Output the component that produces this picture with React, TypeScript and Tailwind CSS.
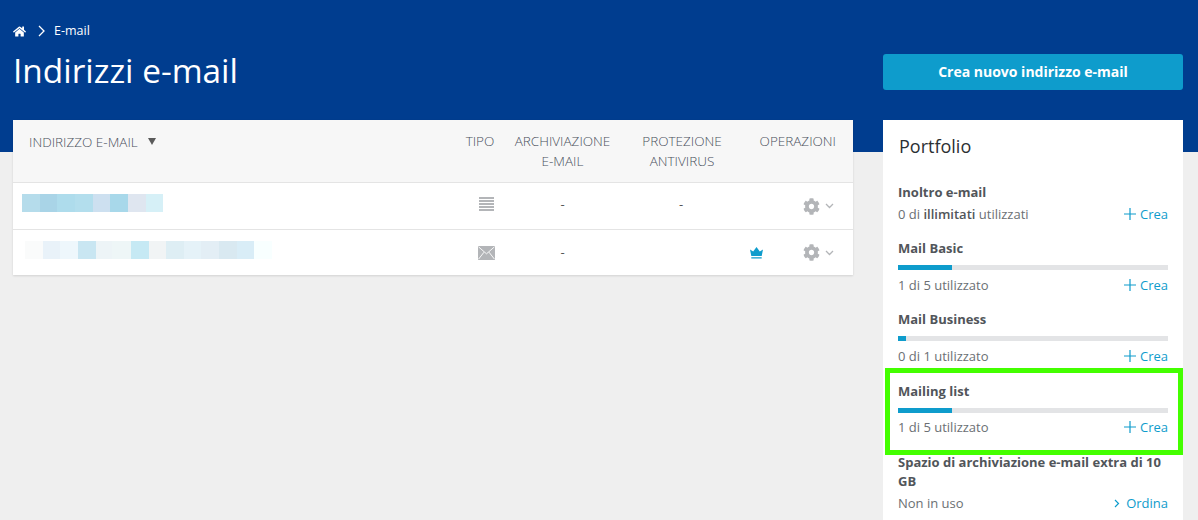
import React from "react";
import { FaCog, FaHome } from "react-icons/fa";

const font = "font-['Open_Sans',sans-serif]";

function Gear() {
  return (
    <div className="flex items-center justify-end gap-[5px] pr-[19px] text-[#b3b5b8]">
      <FaCog className="h-[17px] w-[17px]" />
      <svg width="9" height="6" viewBox="0 0 9 6" fill="none" stroke="#b3b5b8" strokeWidth="1.3"><path d="M1 1l3.5 3.5L8 1" /></svg>
    </div>
  );
}

function Crea() {
  return (
    <span className="flex items-center gap-[4px] text-[#0e9ccc]">
      <svg width="12" height="12" viewBox="0 0 12 12" stroke="#0e9ccc" strokeWidth="1.2"><path d="M6 0v12M0 6h12" /></svg>
      Crea
    </span>
  );
}

function Bar({ w }: { w: string }) {
  return (
    <div className="mt-[8px] h-[5px] w-full bg-[#e3e4e6]">
      <div className={`h-full bg-[#0e9ccc] ${w}`} />
    </div>
  );
}

function Quota({ title, w, text, gap }: { title: string; w: string; text: string; gap: string }) {
  return (
    <div>
      <div className="text-[13px] leading-[18px] font-bold text-[#51555a]">{title}</div>
      <Bar w={w} />
      <div className={`${gap} flex items-center justify-between text-[13px] leading-[18px] text-[#6b6f73]`}>
        <span>{text}</span>
        <Crea />
      </div>
    </div>
  );
}

export default function App() {
  return (
    <div className={`${font} h-[520px] w-[1198px] overflow-hidden bg-[#efefef]`}>
      <header className="flex h-[152px] items-start justify-between bg-[#003d8f] pr-[15px] pl-[13px] text-white">
        <div>
          <div className="mt-[22px] flex h-[18px] items-center text-[12.5px]">
            <FaHome className="h-[13px] w-[13px]" />
            <svg className="mr-[8px] ml-[12px]" width="8" height="12" viewBox="0 0 8 12" fill="none" stroke="white" strokeWidth="1.3"><path d="M1 1l5 5-5 5" /></svg>
            <span>E-mail</span>
          </div>
          <h1 className="mt-[7px] text-[33.4px] leading-[46px] font-normal">Indirizzi e-mail</h1>
        </div>
        <button className="mt-[54px] h-[36px] w-[300px] rounded-[3px] bg-[#0e9ccc] pb-[1px] text-[14px] font-bold text-white">Crea nuovo indirizzo e-mail</button>
      </header>

      <div className="-mt-[32px] flex items-start justify-between pr-[15px] pl-[13px]">
        <main className="w-[840px] bg-white shadow-[0_1px_2px_rgba(0,0,0,0.12)]">
          <div className="grid h-[63px] grid-cols-[442px_50px_115px_122px_111px] border-b border-[#e4e4e4] bg-[#f7f7f7] pt-[11px] text-center text-[13.5px] leading-[20px] font-light text-[#4a505c]">
            <div className="mt-[1px] flex items-start pl-[16px]">
              <span>INDIRIZZO E-MAIL</span>
              <svg className="mt-[6px] ml-[10px]" width="8" height="7" viewBox="0 0 8 7" fill="#5a5a5a"><path d="M0 0h8L4 7z" /></svg>
            </div>
            <div>TIPO</div>
            <div>ARCHIVIAZIONE<br />E-MAIL</div>
            <div className="pl-[2px]">PROTEZIONE<br />ANTIVIRUS</div>
            <div className="pr-[17px] text-right">OPERAZIONI</div>
          </div>

          <div className="grid h-[47px] grid-cols-[442px_50px_115px_122px_111px] items-center border-b border-[#e4e4e4] text-center text-[13px] text-[#555]">
            <div className="mb-[6px] flex pl-[9px]">
              <div className="h-[18px] w-[18px] bg-[#b5dceb]" />
              <div className="h-[18px] w-[17px] bg-[#a9d4e7]" />
              <div className="h-[18px] w-[18px] bg-[#aedcec]" />
              <div className="h-[18px] w-[18px] bg-[#b3deed]" />
              <div className="h-[18px] w-[17px] bg-[#cde0f0]" />
              <div className="h-[18px] w-[18px] bg-[#a8d8ea]" />
              <div className="h-[18px] w-[18px] bg-[#dfe6f0]" />
              <div className="h-[18px] w-[17px] bg-[#d6f0f7]" />
            </div>
            <div className="mb-[4px] flex justify-center pl-[13px]">
              <svg width="15" height="14" viewBox="0 0 15 14" fill="#b3b5b8"><path d="M0 0h15v2H0zM0 3h15v2H0zM0 6h15v2H0zM0 9h15v2H0zM0 12h15v2H0z" /></svg>
            </div>
            <div className="mb-[2px]">-</div>
            <div className="mb-[2px]">-</div>
            <Gear />
          </div>

          <div className="grid h-[45px] grid-cols-[442px_50px_115px_122px_111px] items-center text-center text-[13px] text-[#555]">
            <div className="mb-[6px] flex pl-[12px]">
              <div className="h-[18px] w-[18px] bg-[#fafbfb]" />
              <div className="h-[18px] w-[17px] bg-[#e9f2f9]" />
              <div className="h-[18px] w-[18px] bg-[#eef7fc]" />
              <div className="h-[18px] w-[18px] bg-[#c9e6f2]" />
              <div className="h-[18px] w-[16px] bg-[#edf4f7]" />
              <div className="h-[18px] w-[19px] bg-[#eef6f7]" />
              <div className="h-[18px] w-[18px] bg-[#c6e9f4]" />
              <div className="h-[18px] w-[17px] bg-[#f1f4f5]" />
              <div className="h-[18px] w-[18px] bg-[#deeef4]" />
              <div className="h-[18px] w-[17px] bg-[#e5f2f8]" />
              <div className="h-[18px] w-[18px] bg-[#e3eef5]" />
              <div className="h-[18px] w-[18px] bg-[#d9e9f1]" />
              <div className="h-[18px] w-[17px] bg-[#d9edf7]" />
              <div className="h-[18px] w-[18px] bg-[#f8ffff]" />
            </div>
            <div className="flex justify-center pl-[13px]">
              <svg width="17" height="14" viewBox="0 0 17 14"><path d="M0 0h17v14H0z" fill="#b3b5b8" /><path d="M0.500 0.800l8 7 8-7M0.500 13.200l5.500-7M16.500 13.200L11 6.200" fill="none" stroke="#fff" strokeWidth="0.9" /></svg>
            </div>
            <div>-</div>
            <div />
            <div className="flex items-center justify-between">
              <svg className="ml-[8px]" width="13" height="12" viewBox="0 0 13 12" fill="#0e9ccc"><path d="M0 2.500l3.200 2L6.500 0l3.300 4.500 3.200-2-1.300 6.500H1.300zM1.300 10.200h10.400v1.300H1.300z" /></svg>
              <Gear />
            </div>
          </div>
        </main>

        <aside className="h-[420px] w-[300px] bg-white">
          <h2 className="mt-[14px] px-[16px] text-[18px] leading-[24px] font-normal text-[#2b2f33]">Portfolio</h2>
          <div className="mt-[25px] px-[15px]">
            <div className="text-[13px] leading-[18px] font-bold text-[#51555a]">Inoltro e-mail</div>
            <div className="mt-[4px] flex items-center justify-between text-[13px] leading-[18px] text-[#6b6f73]">
              <span>0 di <b className="font-semibold text-[#51555a]">illimitati</b> utilizzati</span>
              <Crea />
            </div>
            <div className="mt-[16px]"><Quota title="Mail Basic" w="w-[54px]" gap="mt-[6px]" text="1 di 5 utilizzato" /></div>
            <div className="mt-[16px]"><Quota title="Mail Business" w="w-[8px]" gap="mt-[6px]" text="0 di 1 utilizzato" /></div>
          </div>
          <div className="mt-[3px] ml-[2px] border-[5px] border-[#44ff00] pt-[9px] pr-[10px] pb-[14px] pl-[8px]">
            <Quota title="Mailing list" w="w-[54px]" gap="mt-[5px]" text="1 di 5 utilizzato" />
          </div>
          <div className="mt-[-2px] px-[15px]">
            <div className="text-[13px] leading-[19px] font-bold text-[#51555a]">Spazio di archiviazione e-mail extra di 10 GB</div>
            <div className="mt-[3px] flex items-center justify-between text-[13px] leading-[18px] text-[#6b6f73]">
              <span>Non in uso</span>
              <span className="flex items-center gap-[6px] text-[#0e9ccc]">
                <svg width="6" height="9" viewBox="0 0 6 9" fill="none" stroke="#0e9ccc" strokeWidth="1.2"><path d="M1 1l3.500 3.500L1 8" /></svg>
                Ordina
              </span>
            </div>
          </div>
        </aside>
      </div>
    </div>
  );
}
